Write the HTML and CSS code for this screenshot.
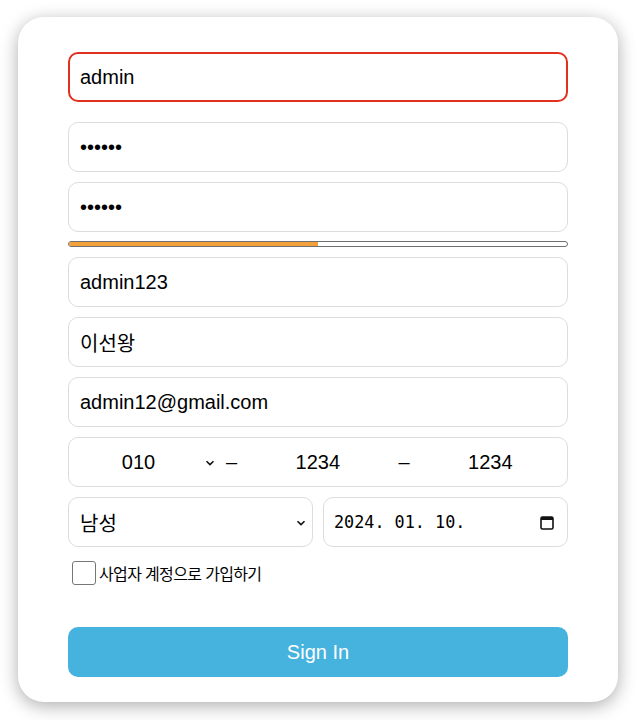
FILE: index.html
```html
<!DOCTYPE html>
<html lang="ko">
<head>
<meta charset="utf-8">
<title>Sign up</title>
<link rel="stylesheet" href="styles.css">
</head>
<body>
<form class="card">
  <input class="field field-error" type="text" value="admin">
  <input class="field field-first-pw" type="password" value="123456">
  <input class="field" type="password" value="123456">
  <div class="strength"><div class="strength-fill" style="width:50%"></div></div>
  <input class="field" type="text" value="admin123">
  <input class="field" type="text" value="이선왕">
  <input class="field" type="text" value="admin12@gmail.com">
  <div class="phone">
    <div class="select-wrap phone-select">
      <select class="plain-select center"><option>010</option></select>
      <svg class="chev" width="10" height="6" viewBox="0 0 10 6"><path d="M1.5 1.2 L5 4.6 L8.5 1.2" fill="none" stroke="#111" stroke-width="1.6"/></svg>
    </div>
    <span class="dash">–</span>
    <input class="phone-input" type="text" value="1234">
    <span class="dash">–</span>
    <input class="phone-input" type="text" value="1234">
  </div>
  <div class="row2">
    <div class="select-wrap box">
      <select class="plain-select gender"><option>남성</option><option>여성</option></select>
      <svg class="chev chev-g" width="10" height="6" viewBox="0 0 10 6"><path d="M1.5 1.2 L5 4.6 L8.5 1.2" fill="none" stroke="#111" stroke-width="1.6"/></svg>
    </div>
    <div class="box date">
      <span class="date-text">2024. 01. 10.</span>
      <svg class="cal" width="14" height="15" viewBox="0 0 14 15"><rect x="1" y="2" width="12" height="12" rx="1.5" fill="none" stroke="#111" stroke-width="1.6"/><rect x="1" y="2" width="12" height="3" fill="#111"/></svg>
    </div>
  </div>
  <label class="check"><span class="check-box"></span><span class="check-label">사업자 계정으로 가입하기</span></label>
  <button class="submit" type="button">Sign In</button>
</form>
</body>
</html>
```
FILE: styles.css
```css
html, body { margin: 0; padding: 0; background: #fff; }
body { font-family: "Liberation Sans", Arial, "Noto Sans CJK KR", sans-serif; min-height: 720px; box-sizing: border-box; padding-top: 17px; padding-bottom: 18px; }
.card {
  box-sizing: border-box;
  width: 600px;
  margin: 0 0 0 18px;
  padding: 35px 50px 25px;
  background: #fff;
  border-radius: 26px;
  box-shadow: 0 4px 18px rgba(0,0,0,0.32);
  display: flex;
  flex-direction: column;
}
.field {
  box-sizing: border-box;
  width: 500px;
  height: 50px;
  border: 1px solid #dcdcdc;
  border-radius: 10px;
  padding: 0 11px;
  font: 20px "Liberation Sans", Arial, "Noto Sans CJK KR", sans-serif;
  color: #000;
  margin-bottom: 10px;
  outline: none;
}
.field-error { border: 2px solid #e2301f; padding: 0 10px; margin-bottom: 20px; }
.strength {
  box-sizing: border-box;
  width: 500px;
  height: 6px;
  margin: -1px 0 10px;
  border: 1px solid #6f6f6f;
  border-radius: 3px;
  background: #fff;
  overflow: hidden;
}
.strength-fill { height: 100%; background: #f2a13a; }
.phone {
  box-sizing: border-box;
  width: 500px;
  height: 50px;
  border: 1px solid #dcdcdc;
  border-radius: 10px;
  display: flex;
  align-items: center;
  padding: 0 3px 0 9px;
  gap: 7px;
  margin-bottom: 10px;
}
.select-wrap { position: relative; }
.phone-select { width: 141px; flex: none; height: 100%; display: flex; align-items: center; }
.plain-select {
  -webkit-appearance: none;
  appearance: none;
  border: none;
  background: transparent;
  outline: none;
  font: 20px "Liberation Sans", Arial, "Noto Sans CJK KR", sans-serif;
  color: #000;
}
.plain-select.center { width: 100%; text-align: center; text-align-last: center; padding: 0 20px 0 0; }
.chev { position: absolute; top: 50%; margin-top: -2px; pointer-events: none; }
.phone-select .chev { right: 4px; }
.dash { font: 20px "Liberation Sans", Arial, sans-serif; color: #000; }
.phone-input {
  flex: 1 1 0;
  min-width: 0;
  border: none;
  outline: none;
  text-align: center;
  font: 20px "Liberation Sans", Arial, sans-serif;
  color: #000;
  padding: 0;
}
.row2 { display: grid; grid-template-columns: minmax(0, 1fr) minmax(0, 1fr); gap: 10px; margin-bottom: 14px; }
.box {
  box-sizing: border-box;
  min-width: 0;
  height: 50px;
  border: 1px solid #dcdcdc;
  border-radius: 10px;
  display: flex;
  align-items: center;
}
.gender { width: 100%; height: 100%; padding: 0 11px; font-family: "Noto Sans CJK KR", sans-serif; font-size: 20px; }
.chev-g { right: 6px; }
.date { padding: 0 13px 0 10px; justify-content: space-between; }
.date-text { font: 16.8px "DejaVu Sans Mono", "Liberation Mono", monospace; color: #000; }
.check { display: flex; align-items: center; margin: 0 0 42px 4px; height: 24px; }
.check-box {
  box-sizing: border-box;
  width: 24px;
  height: 24px;
  border: 1px solid #767676;
  border-radius: 3px;
  background: #fff;
  margin-right: 3px;
}
.check-label { font: 16px "Noto Sans CJK KR", sans-serif; letter-spacing: -0.65px; color: #000; }
.submit {
  box-sizing: border-box;
  width: 500px;
  height: 50px;
  border: none;
  border-radius: 10px;
  background: #46b2de;
  color: #fff;
  font: 20px "Liberation Sans", Arial, sans-serif;
}
```
